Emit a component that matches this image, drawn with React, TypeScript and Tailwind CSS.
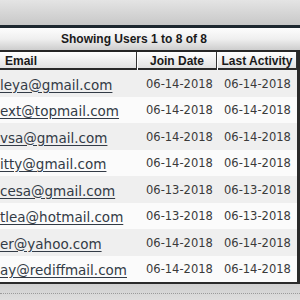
const users = [
  { email: 'leya@gmail.com', join: '06-14-2018', last: '06-14-2018' },
  { email: 'ext@topmail.com', join: '06-14-2018', last: '06-14-2018' },
  { email: 'vsa@gmail.com', join: '06-14-2018', last: '06-14-2018' },
  { email: 'itty@gmail.com', join: '06-14-2018', last: '06-14-2018' },
  { email: 'cesa@gmail.com', join: '06-13-2018', last: '06-13-2018' },
  { email: 'tlea@hotmail.com', join: '06-13-2018', last: '06-13-2018' },
  { email: 'er@yahoo.com', join: '06-14-2018', last: '06-14-2018' },
  { email: 'ay@rediffmail.com', join: '06-14-2018', last: '06-14-2018' },
];

const headFont = "font-['Liberation_Sans',Arial,sans-serif] font-bold text-[12px] text-[#1a1a1a]";
const bodyFont = "font-['DejaVu_Sans',Verdana,sans-serif] text-[#3a3a3a]";

export default function App() {
  return (
    <div className="w-[300px] h-[300px] overflow-hidden bg-[#d6d6d6] flex flex-col">
      {/* page background above the panel */}
      <div className="h-[25px] shrink-0 bg-gradient-to-b from-[#e4e4e4] to-[#c8c8c8]" />
      <div className="h-[3px] shrink-0 bg-[#1e2830]" />

      {/* title bar */}
      <div className="h-[22px] shrink-0 bg-gradient-to-b from-[#fdfdfd] via-[#efefef] to-[#cdcdcd] flex items-center justify-center pr-[32px]">
        <span className={headFont}>Showing Users 1 to 8 of 8</span>
      </div>
      <div className="h-[2px] shrink-0 bg-[#262626]" />

      {/* table */}
      <div className="flex border-r-[3px] border-[#2a2a2a] bg-[#fafafa]">
        <div className="w-[297px]">
          <div className="grid grid-cols-[137px_80px_80px] h-[18px] border-b-2 border-[#2a2a2a] bg-gradient-to-b from-[#ffffff] to-[#e2e2e2]">
            <div className="border-r border-[#333] flex items-center pl-[5px]">
              <span className={headFont}>Email</span>
            </div>
            <div className="border-r border-[#333] border-l border-l-white flex items-center justify-center">
              <span className={headFont}>Join Date</span>
            </div>
            <div className="border-r border-[#333] border-l border-l-white flex items-center justify-center">
              <span className={headFont}>Last Activity</span>
            </div>
          </div>

          {users.map((u, i) => (
            <div
              key={i}
              className={
                'grid grid-cols-[137px_80px_80px] h-[26.5px] items-center ' +
                (i % 2 === 0 ? 'bg-[#efefef]' : 'bg-[#fbfbfb]')
              }
            >
              <a className={bodyFont + ' text-[13.5px] underline underline-offset-2 pt-[3px] text-[#333b46]'}>{u.email}</a>
              <span className={bodyFont + ' text-[11.5px] pl-[9px] pt-[2px]'}>{u.join}</span>
              <span className={bodyFont + ' text-[11.5px] pl-[7px] pt-[2px]'}>{u.last}</span>
            </div>
          ))}
        </div>
      </div>
      <div className="h-[2px] shrink-0 bg-[#2a2a2a]" />

      {/* footer strip */}
      <div className="flex-1 bg-gradient-to-b from-[#cfcfcf] to-[#dedede] pt-[9px]">
        <div className="border-t border-dotted border-[#9a9a9a]" />
      </div>
    </div>
  );
}
